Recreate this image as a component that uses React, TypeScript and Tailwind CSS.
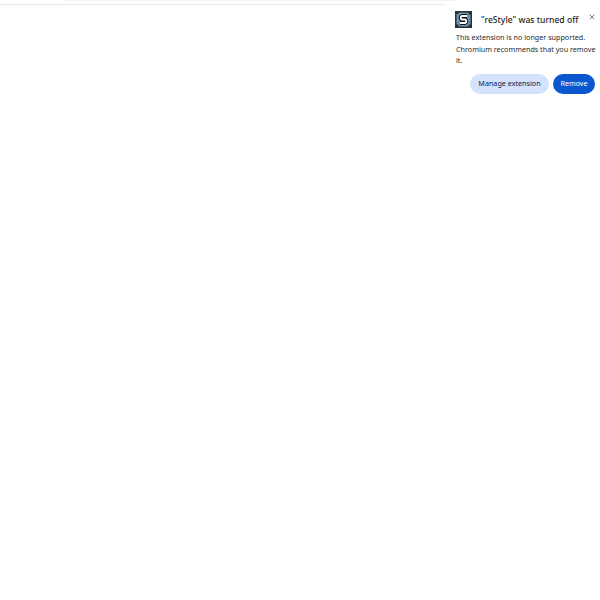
export default function App() {
  return (
    <div className="relative h-[600px] w-[600px] overflow-hidden bg-white font-['Noto_Sans',sans-serif]">
      <div className="absolute left-[65px] top-0 h-px w-[470px] bg-[#eef0fb]" />
      <div className="absolute right-0 top-0 h-px w-2 bg-[#dddddd]" />
      <div className="absolute left-0 top-1 h-px w-[445px] bg-[#e8e8e8]" />
      <div className="absolute right-0 top-0 flex w-[145px] flex-col items-start bg-white pr-[5px] pt-[11px] text-[#1f1f1f]">
        <div className="flex h-[17px] w-full items-center">
          <svg width="17" height="17" viewBox="0 0 17 17" className="shrink-0">
            <rect width="17" height="17" fill="#22333d" />
            <rect x="1.5" y="1.5" width="14" height="14" fill="#6f93a5" />
            <path d="M1 1h2.5v2H1zM13.5 1H16v2.5h-2.5zM1 13.500h2.500V16H1zM13.500 13.500H16V16h-2.500z" fill="#22333d" />
            <path d="M12 5H7a1.800 1.800 0 0 0 0 3.500h3a1.800 1.800 0 0 1 0 3.500H5" fill="none" stroke="#0c1418" strokeWidth="3.800" />
            <path d="M12 5H7a1.800 1.800 0 0 0 0 3.500h3a1.800 1.800 0 0 1 0 3.500H5" fill="none" stroke="#ffffff" strokeWidth="1.900" />
          </svg>
          <span className="ml-[9px] whitespace-nowrap text-[8.6px] font-medium leading-4">"reStyle" was turned off</span>
        </div>
        <p className="ml-px mt-[4px] w-[141px] text-[7.2px] leading-[11.5px] text-[#2a2a2a]">
          This extension is no longer supported. Chromium recommends that you remove it.
        </p>
        <div className="mt-[7px] flex w-full justify-end gap-1">
          <button className="h-5 w-[79px] rounded-full bg-[#d3e3fd] text-[7.2px] font-normal text-[#0a2050]">Manage extension</button>
          <button className="h-5 w-[42px] rounded-full bg-[#0b57d0] text-[7.2px] font-normal text-white">Remove</button>
        </div>
      </div>
      <svg width="6" height="6" viewBox="0 0 6 6" className="absolute left-[588.5px] top-[14px]">
        <path d="M.8.8l4.4 4.4M5.2.8L.8 5.2" stroke="#555" strokeWidth="0.8" />
      </svg>
    </div>
  );
}
